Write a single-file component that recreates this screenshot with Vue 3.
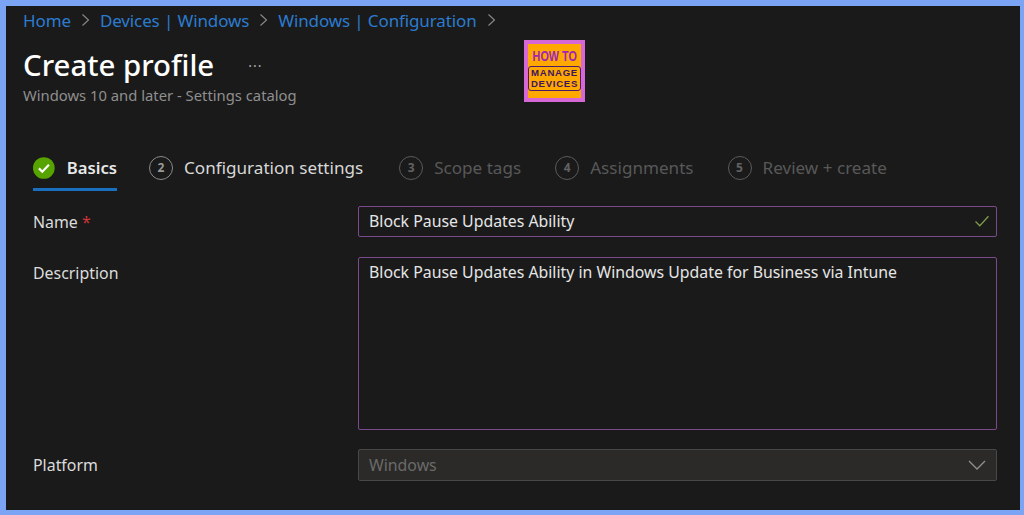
<script setup>
const crumbs = ['Home', 'Devices | Windows', 'Windows | Configuration']
const steps = [
  { n: 2, label: 'Configuration settings', cls: 'active', gap: 'g2' },
  { n: 3, label: 'Scope tags', cls: 'muted', gap: 'g3' },
  { n: 4, label: 'Assignments', cls: 'muted', gap: 'g4' },
  { n: 5, label: 'Review + create', cls: 'muted', gap: 'g5' }
]
</script>

<template>
  <div class="frame">
    <nav class="crumbs">
      <template v-for="c in crumbs" :key="c">
        <a class="crumb">{{ c }}</a>
        <svg class="sep" width="9" height="14" viewBox="0 0 9 14"><path d="M1.5 1.5 7.5 7l-6 5.5" fill="none" stroke="#8a8a8a" stroke-width="1.1" /></svg>
      </template>
    </nav>

    <header class="head">
      <div class="title-row">
        <h1>Create profile</h1>
        <span class="more">···</span>
      </div>
      <p class="sub">Windows 10 and later - Settings catalog</p>
      <div class="logo">
        <span class="how">HOW TO</span>
        <div class="boxed">
          <span>MANAGE</span>
          <span>DEVICES</span>
        </div>
      </div>
    </header>

    <div class="steps">
      <div class="step first">
        <svg width="24" height="24" viewBox="0 0 24 24"><circle cx="12" cy="12" r="12" fill="#57a300" /><path d="M6.6 12.4l3.7 3.7 7.3-7.6" fill="none" stroke="#fff" stroke-width="2.4" /></svg>
        <span class="step-label">Basics</span>
      </div>
      <div v-for="s in steps" :key="s.n" class="step" :class="[s.cls, s.gap]">
        <span class="num">{{ s.n }}</span>
        <span class="step-label">{{ s.label }}</span>
      </div>
    </div>

    <div class="form">
      <label class="lab">Name <span class="req">*</span></label>
      <div class="field input">
        <span>Block Pause Updates Ability</span>
        <svg width="16" height="12" viewBox="0 0 16 13"><path d="M1 7l4.6 4.6L15 1.4" fill="none" stroke="#7f9a4a" stroke-width="1.4" /></svg>
      </div>
      <label class="lab">Description</label>
      <div class="field area">Block Pause Updates Ability in Windows Update for Business via Intune</div>
      <label class="lab">Platform</label>
      <div class="field select">
        <span>Windows</span>
        <svg width="18" height="10" viewBox="0 0 18 10"><path d="M1 1l8 8 8-8" fill="none" stroke="#8f8f8f" stroke-width="1.3" /></svg>
      </div>
    </div>
  </div>
</template>

<style>
html, body { margin: 0; background: #1a1a1a; }
</style>

<style scoped>
.frame {
  box-sizing: border-box;
  width: 1024px;
  height: 515px;
  overflow: hidden;
  background: #1a1a1a;
  border: solid #7ba4f4;
  border-width: 6px 4px 5px 6px;
  padding: 0 23px 0 17px;
  font-family: "Noto Sans", "Open Sans", sans-serif;
  color: #e6e6e6;
  font-size: 16px;
}
.crumbs {
  display: flex;
  align-items: center;
  height: 28px;
  gap: 10px;
}
.crumb { color: #2b7cd0; font-size: 17px; letter-spacing: -0.12px; }
.head { position: relative; height: 86px; box-sizing: border-box; padding-top: 10px; }
.title-row { display: flex; align-items: center; height: 42px; }
h1 {
  margin: 0;
  font-size: 29.4px;
  font-weight: 500;
  color: #fff;
}
.more { margin-left: 34px; color: #aaa; font-size: 14px; letter-spacing: 1px; }
.sub { margin: 0; font-size: 14.8px; color: #8f8f8f; line-height: 18px; }
.logo {
  position: absolute;
  left: 501px;
  top: 6px;
  box-sizing: border-box;
  width: 61px;
  height: 62px;
  background: #ffa800;
  border: 4px solid #d667d6;
  display: flex;
  flex-direction: column;
  align-items: center;
  font-family: "Liberation Sans", sans-serif;
  font-weight: 700;
}
.how {
  color: #a024b8;
  font-size: 15px;
  line-height: 14px;
  margin-top: 5px;
  transform: scaleX(.72);
  white-space: nowrap;
}
.boxed {
  box-sizing: border-box;
  flex: none;
  width: 53px;
  height: 25px;
  margin-top: 3px;
  border: 1.5px solid #4c1a6a;
  border-radius: 3px;
  color: #3d1560;
  font-size: 9.6px;
  line-height: 11px;
  letter-spacing: .7px;
  display: flex;
  flex-direction: column;
  align-items: center;
  white-space: nowrap;
}
.steps {
  display: flex;
  height: 44px;
  margin-top: 27px;
  margin-left: 10px;
}
.step { display: flex; align-items: center; height: 41px; gap: 11px; font-size: 17.1px; }
.step.first {
  font-size: 16.7px;
  font-weight: 600;
  color: #e8e8e8;
  gap: 12px;
  box-shadow: 0 3px 0 #1a6fc0;
  width: 84px;
}
.num {
  box-sizing: border-box;
  width: 24px;
  height: 24px;
  border-radius: 50%;
  border: 1.5px solid #8a8a8a;
  display: flex;
  align-items: center;
  justify-content: center;
  font-size: 12px;
  font-weight: 700;
  color: #9a9a9a;
}
.active { color: #d8d8d8; }
.muted { color: #585858; }
.muted .num { border-color: #5a5a5a; color: #626262; }
.g2 { margin-left: 32px; }
.g3 { margin-left: 36px; }
.g4 { margin-left: 34px; }
.g5 { margin-left: 34px; }
.form {
  display: grid;
  grid-template-columns: 325px 1fr;
  grid-template-rows: 51px 192px 32px;
  margin-top: 15px;
  margin-left: 10px;
}
.lab { font-size: 15.9px; color: #dcdcdc; line-height: 32px; }
.req { color: #d13438; }
.field {
  box-sizing: border-box;
  border: 1.5px solid #7b4a8c;
  border-radius: 2px;
  padding: 0 10px;
  color: #e6e6e6;
  font-size: 15.85px;
  line-height: 28px;
}
.input {
  display: flex;
  justify-content: space-between;
  align-items: center;
  height: 31px;
  padding: 0 6px 2px 10px;
}
.area { height: 173px; }
.select {
  display: flex;
  justify-content: space-between;
  align-items: center;
  height: 32px;
  border: 1px solid #484848;
  background: #2b2a29;
  color: #6a6a6a;
}
</style>
